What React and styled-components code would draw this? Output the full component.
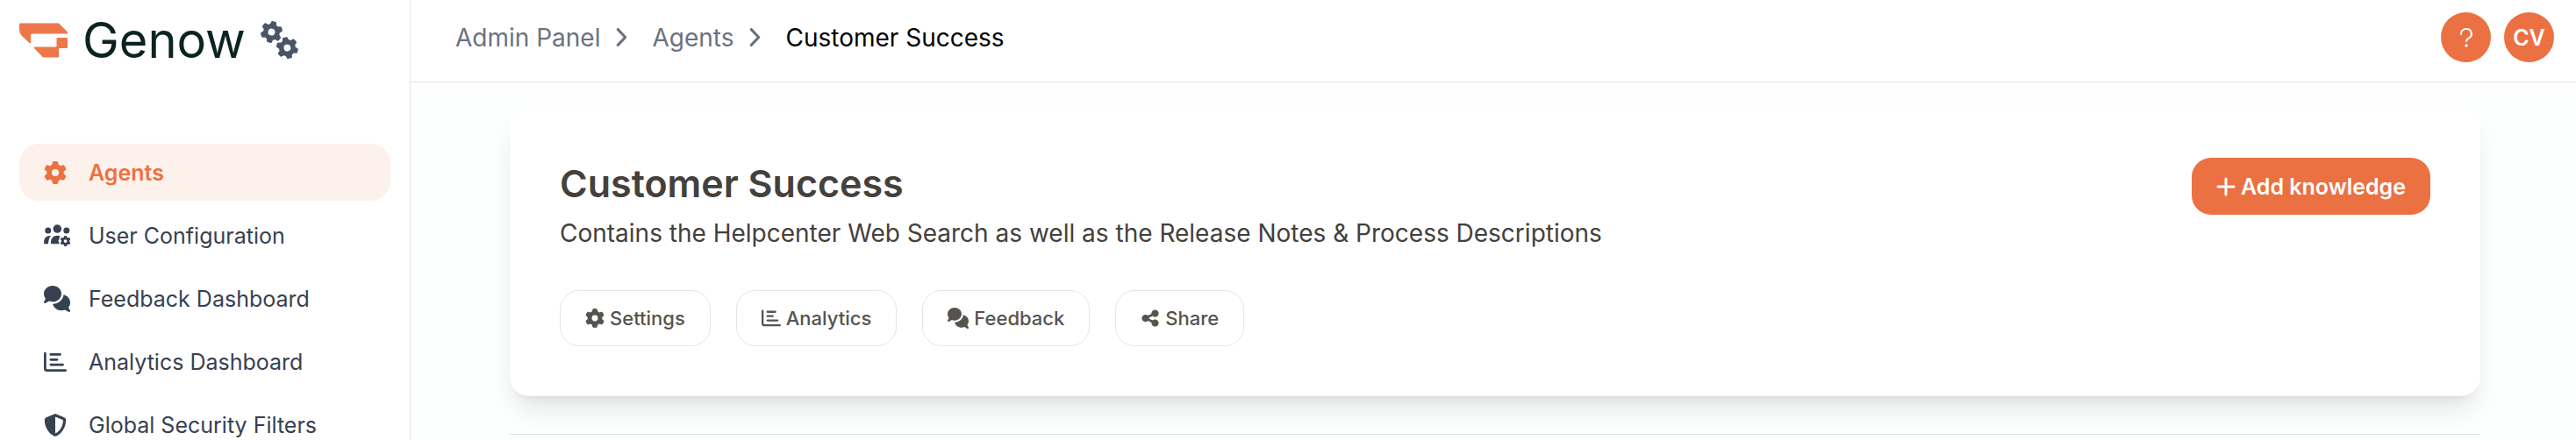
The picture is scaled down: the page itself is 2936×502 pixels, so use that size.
import React from 'react';
import styled, { createGlobalStyle } from 'styled-components';
import { FaGear, FaShieldHalved, FaShareNodes } from 'react-icons/fa6';

const CommentsIcon = () => (
  <svg viewBox="0 -32 576 576" fill="currentColor" aria-hidden="true">
    <path d="M384 144c0 97.2-86 176-192 176-26.7 0-52.1-5-75.2-14L35.2 349.2c-9.3 4.9-20.7 3.2-28.2-4.2s-9.2-18.9-4.2-28.2l35.6-67.2C14.3 220.2 0 183.6 0 144 0 46.8 86-32 192-32S384 46.8 384 144zm0 368c-94.1 0-172.4-62.1-188.8-144 120-1.5 224.3-86.9 235.8-202.7 83.3 19.2 145 88.3 145 170.7 0 39.6-14.3 76.2-38.4 105.6l35.6 67.2c4.9 9.3 3.2 20.7-4.2 28.2s-18.9 9.2-28.2 4.2L459.2 498c-23.1 9-48.5 14-75.2 14z" />
  </svg>
);

const UsersGearIcon = () => (
  <svg viewBox="0 0 94 94" fill="currentColor" aria-hidden="true">
    <circle cx="15" cy="28" r="11" />
    <circle cx="48" cy="22" r="15" />
    <circle cx="81" cy="28" r="11" />
    <path d="M0 73C0 57 8 47 20 47H25C19 54 17 62 16 73Q16 76 14 76H3Q0 76 0 73Z" />
    <path d="M25 72C25 56 34 46 48 46Q54 46 59 48C56 51 54 54 56 58C51 62 51 67 54 70Q53 73 56 76H28Q25 76 25 72Z" />
    <FaGear x="58" y="47" size={38} />
  </svg>
);

const ChartIcon = () => (
  <svg viewBox="0 0 76 76" fill="none" stroke="currentColor" strokeWidth="8" strokeLinecap="round" aria-hidden="true">
    <path d="M4 9V60Q4 66 10 66H72" />
    <path d="M23 13H54M23 30H44M23 47H63" />
  </svg>
);

const ChevronIcon = () => (
  <svg viewBox="0 0 12 20" fill="none" stroke="currentColor" strokeWidth="3" strokeLinecap="round" strokeLinejoin="round" aria-hidden="true">
    <path d="M2 1.500l8 8.500-8 8.500" />
  </svg>
);

const PlusIcon = () => (
  <svg viewBox="0 0 22 22" fill="none" stroke="currentColor" strokeWidth="3" strokeLinecap="round" aria-hidden="true">
    <path d="M11 2v18M2 11h18" />
  </svg>
);

const QuestionIcon = () => (
  <svg viewBox="0 0 14 22" fill="none" stroke="currentColor" strokeWidth="2" strokeLinecap="round" strokeLinejoin="round" aria-hidden="true">
    <path d="M1 7V6.500A5.500 5.500 0 0 1 6.500 1h1a5.500 5.500 0 0 1 2.500 10.300C8 12.400 7 13 7 15" />
    <circle cx="7" cy="20" r="1.700" fill="currentColor" stroke="none" />
  </svg>
);

const LogoMark = () => (
  <svg viewBox="0 0 55 40" fill="#ee774a" aria-hidden="true">
    <path d="M1 0.500H45L55 10.500V12.500H15Q13 12.500 13 14.500V23H11.500L3 15Q0 12 0 8V1.500Q0 0.500 1 0.500Z" />
    <path d="M43.500 17H54Q55 17 55 18V28Q55 29 54 29H46Q45 29 45 30V38.500Q45 39.500 44 39.500H27L17 29V27.500H41.500Q42.500 27.500 42.500 26.500V18Q42.500 17 43.500 17Z" />
  </svg>
);

const GearsIcon = () => (
  <svg viewBox="0 0 44 44" fill="currentColor" aria-hidden="true">
    <g transform="rotate(13 12.500 12.500)"><FaGear x="0" y="0" size={25} /></g>
    <g transform="rotate(-13 31 31)"><FaGear x="18" y="18" size={25} /></g>
  </svg>
);

const navItems = [
  { label: 'Agents', icon: <FaGear />, active: true },
  { label: 'User Configuration', icon: <UsersGearIcon />, wide: true },
  { label: 'Feedback Dashboard', icon: <CommentsIcon />, wide: true },
  { label: 'Analytics Dashboard', icon: <ChartIcon /> },
  { label: 'Global Security Filters', icon: <FaShieldHalved /> },
];

const App = () => {
  return (
    <Page>
      <GlobalStyle />
      <Sidebar>
        <Brand href="#">
          <LogoMark />
          <BrandName>Genow</BrandName>
          <GearsIcon />
        </Brand>
        <Nav>
          {navItems.map((item) => (
            <NavLink href="#" key={item.label} $active={item.active}>
              <NavIcon $wide={item.wide}>{item.icon}</NavIcon>
              {item.label}
            </NavLink>
          ))}
        </Nav>
      </Sidebar>

      <Main>
        <TopBar>
          <Breadcrumb aria-label="Breadcrumb">
            <a href="#">Admin Panel</a>
            <ChevronIcon />
            <a href="#">Agents</a>
            <ChevronIcon />
            <CurrentCrumb>Customer Success</CurrentCrumb>
          </Breadcrumb>
          <UserActions>
            <RoundButton aria-label="Help"><QuestionIcon /></RoundButton>
            <RoundButton>CV</RoundButton>
          </UserActions>
        </TopBar>

        <Content>
          <AgentCard>
            <CardHeader>
              <div>
                <Title>Customer Success</Title>
                <Description>
                  Contains the Helpcenter Web Search as well as the Release Notes &amp; Process Descriptions
                </Description>
              </div>
              <AddButton><PlusIcon />Add knowledge</AddButton>
            </CardHeader>
            <CardActions>
              <ActionButton><FaGear />Settings</ActionButton>
              <ActionButton><ChartIcon />Analytics</ActionButton>
              <ActionButton $wide><CommentsIcon />Feedback</ActionButton>
              <ActionButton><FaShareNodes />Share</ActionButton>
            </CardActions>
          </AgentCard>
          <Divider />
        </Content>
      </Main>
    </Page>
  );
};

const GlobalStyle = createGlobalStyle`
  * {
    box-sizing: border-box;
  }

  body {
    margin: 0;
    background-color: #fdfffe;
    font-family: 'Inter', sans-serif;
  }

  a {
    color: inherit;
    text-decoration: none;
  }

  button {
    font-family: inherit;
    cursor: pointer;
  }
`;

const Page = styled.div`
  display: flex;
  min-height: 100vh;
`;

const Sidebar = styled.aside`
  flex: 0 0 468px;
  height: 100vh;
  padding: 24px 22px 0;
  background-color: #fff;
  border-right: 1px solid #e5e5e5;
  overflow: hidden;
`;

const Brand = styled.a`
  display: flex;
  align-items: center;
  gap: 17px;
  height: 44px;
  color: #4b5468;

  > svg {
    height: 44px;
  }

  > svg:first-child {
    width: 55px;
    height: 40px;
  }
`;

const BrandName = styled.span`
  color: #0b2422;
  font-size: 56px;
  line-height: 44px;
`;

const Nav = styled.nav`
  display: flex;
  flex-direction: column;
  gap: 7px;
  margin-top: 96px;
`;

const NavLink = styled.a`
  display: flex;
  flex-shrink: 0;
  align-items: center;
  height: 65px;
  padding-left: 28px;
  border-radius: 22px;
  color: ${({ $active }) => ($active ? '#ec7142' : '#374151')};
  background-color: ${({ $active }) => ($active ? '#fdf1ec' : 'transparent')};
  font-size: 25px;
  font-weight: ${({ $active }) => ($active ? 600 : 400)};
`;

const NavIcon = styled.span`
  display: flex;
  width: 51px;

  > svg {
    width: ${({ $wide }) => ($wide ? '30px' : '26px')};
    height: ${({ $wide }) => ($wide ? '30px' : '26px')};
  }
`;

const Main = styled.main`
  flex: 1;
  min-width: 0;
`;

const TopBar = styled.header`
  display: flex;
  justify-content: space-between;
  height: 94px;
  padding: 14px 25px 0 51px;
  background-color: #fff;
  border-bottom: 1px solid #e5e5e5;
`;

const Breadcrumb = styled.nav`
  display: flex;
  align-items: center;
  height: 57px;
  color: #6b7280;
  font-size: 28px;

  svg {
    width: 13px;
    height: 21px;
    margin: 0 28px 0 18px;
  }
`;

const CurrentCrumb = styled.span`
  color: #000;
`;

const UserActions = styled.div`
  display: flex;
  gap: 15px;
`;

const RoundButton = styled.button`
  display: flex;
  align-items: center;
  justify-content: center;
  width: 57px;
  height: 57px;
  padding: 0;
  border: none;
  border-radius: 50%;
  color: #fff;
  background-color: #ec7142;
  font-size: 25px;
  font-weight: 600;

  svg {
    width: 14px;
    height: 22px;
  }
`;

const Content = styled.div`
  padding: 28px 109px 0 113px;
`;

const AgentCard = styled.section`
  padding: 58px 57px 57px;
  border-radius: 22px;
  background-color: #fff;
  box-shadow: 0 20px 30px -6px rgba(0, 0, 0, 0.1), 0 8px 12px -8px rgba(0, 0, 0, 0.1);
`;

const CardHeader = styled.div`
  display: flex;
  align-items: flex-start;
  justify-content: space-between;
`;

const Title = styled.h1`
  margin: 0;
  color: #44403c;
  font-size: 43px;
  font-weight: 600;
  line-height: 58px;
`;

const Description = styled.p`
  margin: 10px 0 0;
  color: #44403c;
  font-size: 28px;
  line-height: 36px;
`;

const AddButton = styled.button`
  display: flex;
  align-items: center;
  gap: 6px;
  height: 65px;
  padding: 0 28px;
  border: none;
  border-radius: 22px;
  color: #fff;
  background-color: #ec7142;
  font-size: 25px;
  font-weight: 600;

  svg {
    width: 22px;
    height: 22px;
  }
`;

const CardActions = styled.div`
  display: flex;
  gap: 29px;
  margin-top: 47px;
`;

const ActionButton = styled.button`
  display: flex;
  align-items: center;
  gap: 6px;
  height: 64px;
  padding: 0 28px;
  border: 1px solid #e7e5e4;
  border-radius: 22px;
  color: #57534e;
  background-color: #fff;
  font-size: 22px;
  font-weight: 500;

  svg {
    width: ${({ $wide }) => ($wide ? '24px' : '22px')};
    height: ${({ $wide }) => ($wide ? '24px' : '22px')};
  }
`;

const Divider = styled.hr`
  height: 1px;
  margin: 43px 0 0;
  border: none;
  background-color: #e0e2e1;
`;

export default App;
